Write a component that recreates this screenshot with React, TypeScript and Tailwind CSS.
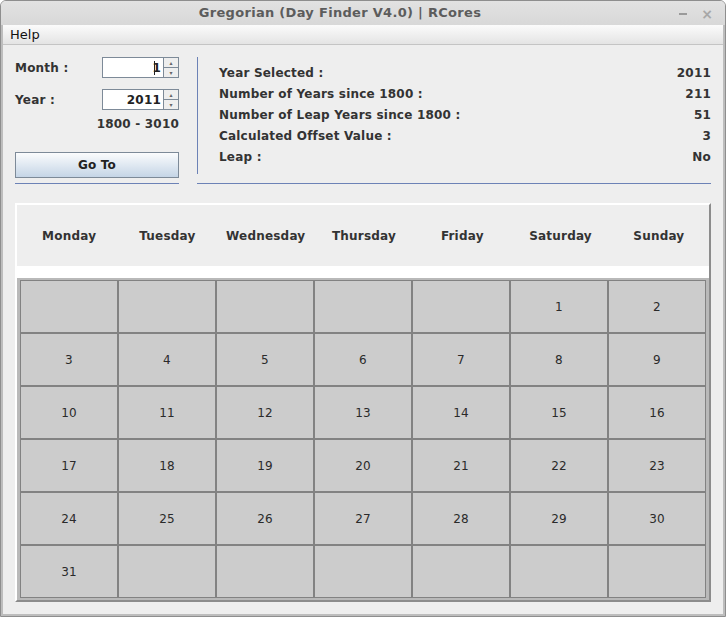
import React from "react";

const days = ["Monday", "Tuesday", "Wednesday", "Thursday", "Friday", "Saturday", "Sunday"];

const cells: (number | null)[] = [
  null, null, null, null, null, 1, 2,
  ...Array.from({ length: 29 }, (_, i) => i + 3),
  null, null, null, null, null, null,
];

const info = [
  ["Year Selected :", "2011"],
  ["Number of Years since 1800 :", "211"],
  ["Number of Leap Years since 1800 :", "51"],
  ["Calculated Offset Value :", "3"],
  ["Leap :", "No"],
];

const Spinner = ({ value, caret }: { value: string; caret?: boolean }) => (
  <div className="flex h-[21px] w-[77px]">
    <div className="flex-1 bg-white border border-[#7d8a98] border-r-0 flex items-center justify-end pr-[2px] text-[12px] tracking-[0.2px] font-bold text-[#222] relative">
      {caret && <span className="absolute right-[8px] top-[3px] w-px h-[14px] bg-[#222]" />}
      {value}
    </div>
    <div className="w-[16px] flex flex-col">
      <div className="h-[11px] border border-[#7d8a98] bg-[#eeeeee] flex items-center justify-center">
        <span className="text-[6px] leading-none text-[#666]">▴</span>
      </div>
      <div className="h-[10px] border border-t-0 border-[#7d8a98] bg-[#eeeeee] flex items-center justify-center">
        <span className="text-[6px] leading-none text-[#666]">▾</span>
      </div>
    </div>
  </div>
);

export default function App() {
  return (
    <div
      className="w-[726px] h-[617px] bg-[#eeeeee] border border-[#8e8e8e] rounded-t-[6px] flex flex-col overflow-hidden text-[#333]"
      style={{ fontFamily: '"DejaVu Sans", Verdana, sans-serif' }}
    >
      {/* title bar */}
      <div className="h-[24px] shrink-0 bg-gradient-to-b from-[#e2e2e2] to-[#d8d8d8] relative flex items-center justify-center pr-[46px]">
        <span className="text-[13px] tracking-[0.3px] font-bold text-[#5c5c5c]">Gregorian (Day Finder V4.0) | RCores</span>
        <span className="absolute right-[38px] top-[12px] w-[8px] h-[2px] bg-[#9a9a9a]" />
        <span className="absolute right-[12px] top-[3px] text-[14px] font-bold text-[#a8a8a8]">×</span>
      </div>
      <div className="flex-1 flex flex-col border-l-2 border-r-2 border-b-2 border-[#bdbdbd]">
        {/* menu bar */}
        <div className="h-[20px] shrink-0 bg-gradient-to-b from-[#fbfbfb] to-[#e4e4e4] border-b border-[#c4c4c4] flex items-center pl-[7px]">
          <span className="text-[13px] text-[#111]">Help</span>
        </div>

        <div className="flex-1 flex flex-col px-[12px] pt-[12px]">
          {/* top section */}
          <div className="flex gap-[18px]">
            <div className="w-[164px] flex flex-col">
              <div className="flex items-center justify-between h-[21px]">
                <span className="text-[12px] tracking-[0.2px] font-bold">Month :</span>
                <Spinner value="1" caret />
              </div>
              <div className="flex items-center justify-between h-[21px] mt-[11px]">
                <span className="text-[12px] tracking-[0.2px] font-bold">Year :</span>
                <Spinner value="2011" />
              </div>
              <div className="text-right text-[12px] tracking-[0.2px] font-bold mt-[6px] leading-[16px]">1800 - 3010</div>
              <button className="mt-[20px] h-[26px] w-full border border-[#7d8a98] bg-gradient-to-b from-[#fbfcfd] to-[#c5d5e6] text-[12px] tracking-[0.2px] font-bold text-[#222]">
                Go To
              </button>
              <div className="mt-[5px] h-px bg-[#6c82b6]" />
            </div>
            <div className="flex-1 flex flex-col">
              <div className="border-l border-[#6c82b6] h-[117px] pl-[21px] pt-[5px]">
                {info.map(([k, v]) => (
                  <div key={k} className="flex justify-between h-[21px] items-center text-[12px] tracking-[0.2px] font-bold">
                    <span>{k}</span>
                    <span>{v}</span>
                  </div>
                ))}
              </div>
              <div className="mt-[9px] h-px bg-[#6c82b6]" />
            </div>
          </div>

          {/* calendar */}
          <div className="mt-[19px] border-2 border-t-white border-l-white border-r-[#8c8c8c] border-b-[#8c8c8c] flex flex-col">
            <div className="h-[61px] grid grid-cols-7 items-center pl-[3px] pr-[1px]">
              {days.map((d) => (
                <div key={d} className="text-center text-[12px] tracking-[0.2px] font-bold">
                  {d}
                </div>
              ))}
            </div>
            <div className="h-[12px] bg-white" />
            <div className="bg-[#b9b9b9] px-[3px] py-[2px] grid grid-cols-[repeat(7,98px)] grid-rows-[repeat(6,53px)]">
              {cells.map((n, i) => (
                <div key={i} className="border border-[#828282] bg-[#cccccc] flex items-center justify-center text-[12px] tracking-[0.2px] text-[#2a2a2a]">
                  {n ?? ""}
                </div>
              ))}
            </div>
          </div>
        </div>
      </div>
    </div>
  );
}
